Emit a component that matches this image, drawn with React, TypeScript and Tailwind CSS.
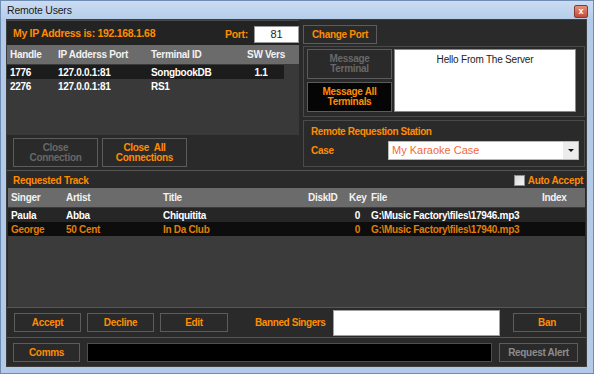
import React from "react";

const ui = "font-['Liberation_Sans',Arial,sans-serif]";

const users = [
  { handle: "1776", ip: "127.0.0.1:81", terminal: "SongbookDB", sw: "1.1", selected: true },
  { handle: "2276", ip: "127.0.0.1:81", terminal: "RS1", sw: "", selected: false },
];

const tracks = [
  { singer: "Paula", artist: "Abba", title: "Chiquitita", disk: "", key: "0", file: "G:\\Music Factory\\files\\17946.mp3", active: false },
  { singer: "George", artist: "50 Cent", title: "In Da Club", disk: "", key: "0", file: "G:\\Music Factory\\files\\17940.mp3", active: true },
];

function Btn({ children, w, h, dim, dark, gray }: { children: React.ReactNode; w: string; h: string; dim?: boolean; dark?: boolean; gray?: boolean }) {
  return (
    <div
      className={[
        "flex items-center justify-center text-center border border-[#5c5c5c] font-bold text-[10px] leading-[10px] tracking-[-0.3px] shrink-0",
        w,
        h,
        dark ? "bg-[#050505]" : "bg-[#2a2a2a]",
        dim ? "text-[#686868]" : gray ? "text-[#8c8c8c]" : "text-[#ff8c00]",
      ].join(" ")}
    >
      {children}
    </div>
  );
}

export default function App() {
  return (
    <div className={`w-[594px] h-[374px] flex flex-col bg-[#b3cbe8] border border-[#6f8db2] ${ui}`}>
      {/* title bar */}
      <div className="h-[18px] flex items-center justify-between pl-[6px] pr-[5px] bg-gradient-to-b from-[#cadcf2] to-[#b6cde9]">
        <span className="text-[10.5px] text-[#1b1b1b] font-['Liberation_Sans',sans-serif] tracking-[-0.2px] mt-[2px]">Remote Users</span>
        <div className="w-[14px] h-[13px] mt-[3px] rounded-[2px] border border-[#8a3a2e] bg-gradient-to-b from-[#e3907f] to-[#c34a37] flex items-center justify-center text-white text-[9px] font-bold leading-none">
          x
        </div>
      </div>

      {/* client */}
      <div className="ml-[5px] mr-[6px] mt-[0px] mb-[6px] flex-1 flex flex-col bg-[#2a2a2a] border border-[#3e3e3e]">
        {/* top section */}
        <div className="h-[150px] flex">
          {/* left column */}
          <div className="w-[292px] flex flex-col">
            <div className="h-[115px] flex flex-col border-t border-[#4a4a4a]">
              <div className="h-[24px] flex items-center bg-[#232323] pl-[6px] pr-0">
                <span className="text-[10.5px] font-bold text-[#ff8c00] tracking-[-0.3px] mt-[2px]">My IP Address is: 192.168.1.68</span>
                <span className="ml-auto text-[10.5px] font-bold text-[#ff8c00] tracking-[-0.3px] mr-[6px] mt-[3px]">Port:</span>
                <div className="w-[45px] h-[17px] bg-white border border-[#9a9a9a] flex items-center justify-center text-[11px] text-[#222] mt-[3px]">81</div>
              </div>
              <div className="flex-1 bg-[#393939] flex flex-col">
                <div className="h-[19px] bg-[#6b6b6b] flex items-center pl-[3px] text-[10px] font-bold text-[#f2f2f2] tracking-[-0.3px]">
                  <span className="w-[48px]">Handle</span>
                  <span className="w-[93px]">IP Adderss Port</span>
                  <span className="w-[93px]">Terminal ID</span>
                  <span className="w-[44px] text-center">SW Vers</span>
                </div>
                <div className="mt-[1px]">
                  {users.map((u) => (
                    <div
                      key={u.handle}
                      className={`h-[14px] w-[277px] flex items-center pl-[3px] text-[10px] font-bold text-white tracking-[-0.3px] ${u.selected ? "bg-[#1c1c1c]" : ""}`}
                    >
                      <span className="w-[48px]">{u.handle}</span>
                      <span className="w-[93px]">{u.ip}</span>
                      <span className="w-[93px]">{u.terminal}</span>
                      <span className="w-[34px] text-center">{u.sw}</span>
                    </div>
                  ))}
                </div>
              </div>
            </div>
            <div className="flex gap-[4px] mt-[3px] ml-[6px]">
              <Btn w="w-[85px]" h="h-[29px]" dim>
                Close
                <br />
                Connection
              </Btn>
              <Btn w="w-[85px]" h="h-[29px]">
                Close&nbsp; All
                <br />
                Connections
              </Btn>
            </div>
          </div>

          {/* right column */}
          <div className="ml-[4px] w-[282px] flex flex-col">
            <div className="mt-[5px]">
              <Btn w="w-[74px]" h="h-[19px]">Change Port</Btn>
            </div>
            <div className="mt-[2px] h-[71px] border border-[#4a4a4a] flex pl-[3px] pt-[2px] gap-[2px]">
              <div className="flex flex-col gap-[3px]">
                <Btn w="w-[85px]" h="h-[30px]" dim>
                  Message
                  <br />
                  Terminal
                </Btn>
                <Btn w="w-[85px]" h="h-[30px]" dark>
                  Message All
                  <br />
                  Terminals
                </Btn>
              </div>
              <div className="w-[182px] h-[63px] bg-white border border-[#8a8a8a] text-center text-[10px] text-[#222] pt-[2px] tracking-[-0.2px]">
                Hello From The Server
              </div>
            </div>
            <div className="mt-[3px] h-[47px] border border-[#4a4a4a] flex flex-col pl-[7px]">
              <span className="text-[10px] font-bold text-[#ff8c00] tracking-[-0.4px] mt-[5px] leading-[12px]">Remote Requestion Station</span>
              <div className="flex items-center mt-[3px]">
                <span className="w-[77px] text-[10px] font-bold text-[#ff8c00] tracking-[-0.3px]">Case</span>
                <div className="w-[191px] h-[19px] bg-white border border-[#b8b8b8] flex items-center">
                  <span className="flex-1 pl-[3px] text-[11px] text-[#f26a3a]">My Karaoke Case</span>
                  <div className="w-[15px] h-full bg-[#ececec] flex items-center justify-center">
                    <svg width="6" height="3" viewBox="0 0 6 3">
                      <path d="M0 0h6L3 3z" fill="#111" />
                    </svg>
                  </div>
                </div>
              </div>
            </div>
          </div>
        </div>

        <div className="h-[1px] bg-[#555]" />

        {/* requested track strip */}
        <div className="h-[17px] flex items-center pl-[6px] pr-[3px]">
          <span className="text-[10px] font-bold text-[#ff8c00] tracking-[-0.3px] mt-[2px]">Requested Track</span>
          <div className="ml-auto w-[11px] h-[11px] border border-[#8e8e8e] bg-gradient-to-br from-[#d8d8d8] to-[#f6f6f6] mt-[1px]" />
          <span className="ml-[3px] text-[10px] font-bold text-[#ff8c00] tracking-[-0.3px] mt-[2px]">Auto Accept</span>
        </div>

        {/* track list */}
        <div className="h-[119px] ml-[1px] w-[577px] bg-[#3b3b3b] flex flex-col">
          <div className="h-[19px] bg-[#6b6b6b] flex items-center pl-[3px] text-[10px] font-bold text-[#f2f2f2] tracking-[-0.3px] shrink-0">
            <span className="w-[55px]">Singer</span>
            <span className="w-[97px]">Artist</span>
            <span className="w-[145px]">Title</span>
            <span className="w-[41px]">DiskID</span>
            <span className="w-[22px]">Key</span>
            <span className="w-[171px]">File</span>
            <span>Index</span>
          </div>
          <div className="mt-[1px]">
            {tracks.map((t) => (
              <div
                key={t.singer}
                className={`h-[14px] flex items-center pl-[3px] text-[10px] font-bold tracking-[-0.3px] ${t.active ? "bg-[#0d0d0d] text-[#e07f06]" : "bg-[#262626] text-white"}`}
              >
                <span className="w-[55px]">{t.singer}</span>
                <span className="w-[97px]">{t.artist}</span>
                <span className="w-[145px]">{t.title}</span>
                <span className="w-[41px]">{t.disk}</span>
                <span className="w-[22px] text-right pr-[11px]">{t.key}</span>
                <span className="w-[171px] whitespace-nowrap">{t.file}</span>
              </div>
            ))}
          </div>
        </div>

        <div className="h-[1px] bg-[#565656]" />

        {/* action row */}
        <div className="h-[29px] flex items-center pl-[7px]">
          <div className="flex gap-[6px]">
            <Btn w="w-[67px]" h="h-[19px]">Accept</Btn>
            <Btn w="w-[67px]" h="h-[19px]">Decline</Btn>
            <Btn w="w-[68px]" h="h-[19px]">Edit</Btn>
          </div>
          <span className="ml-[27px] w-[78px] text-[10px] font-bold text-[#ff8c00] tracking-[-0.4px]">Banned Singers</span>
          <div className="w-[167px] h-[26px] bg-white border border-[#a0a0a0]" />
          <div className="ml-[13px]">
            <Btn w="w-[68px]" h="h-[19px]">Ban</Btn>
          </div>
        </div>

        <div className="h-[1px] bg-[#565656]" />

        {/* comms row */}
        <div className="h-[28px] flex items-center pl-[6px] pt-[1px]">
          <Btn w="w-[67px]" h="h-[19px]">Comms</Btn>
          <div className="ml-[7px] w-[405px] h-[19px] bg-black border border-[#4e4e4e]" />
          <div className="ml-[7px]">
            <Btn w="w-[79px]" h="h-[19px]" gray>Request Alert</Btn>
          </div>
        </div>
      </div>
    </div>
  );
}
